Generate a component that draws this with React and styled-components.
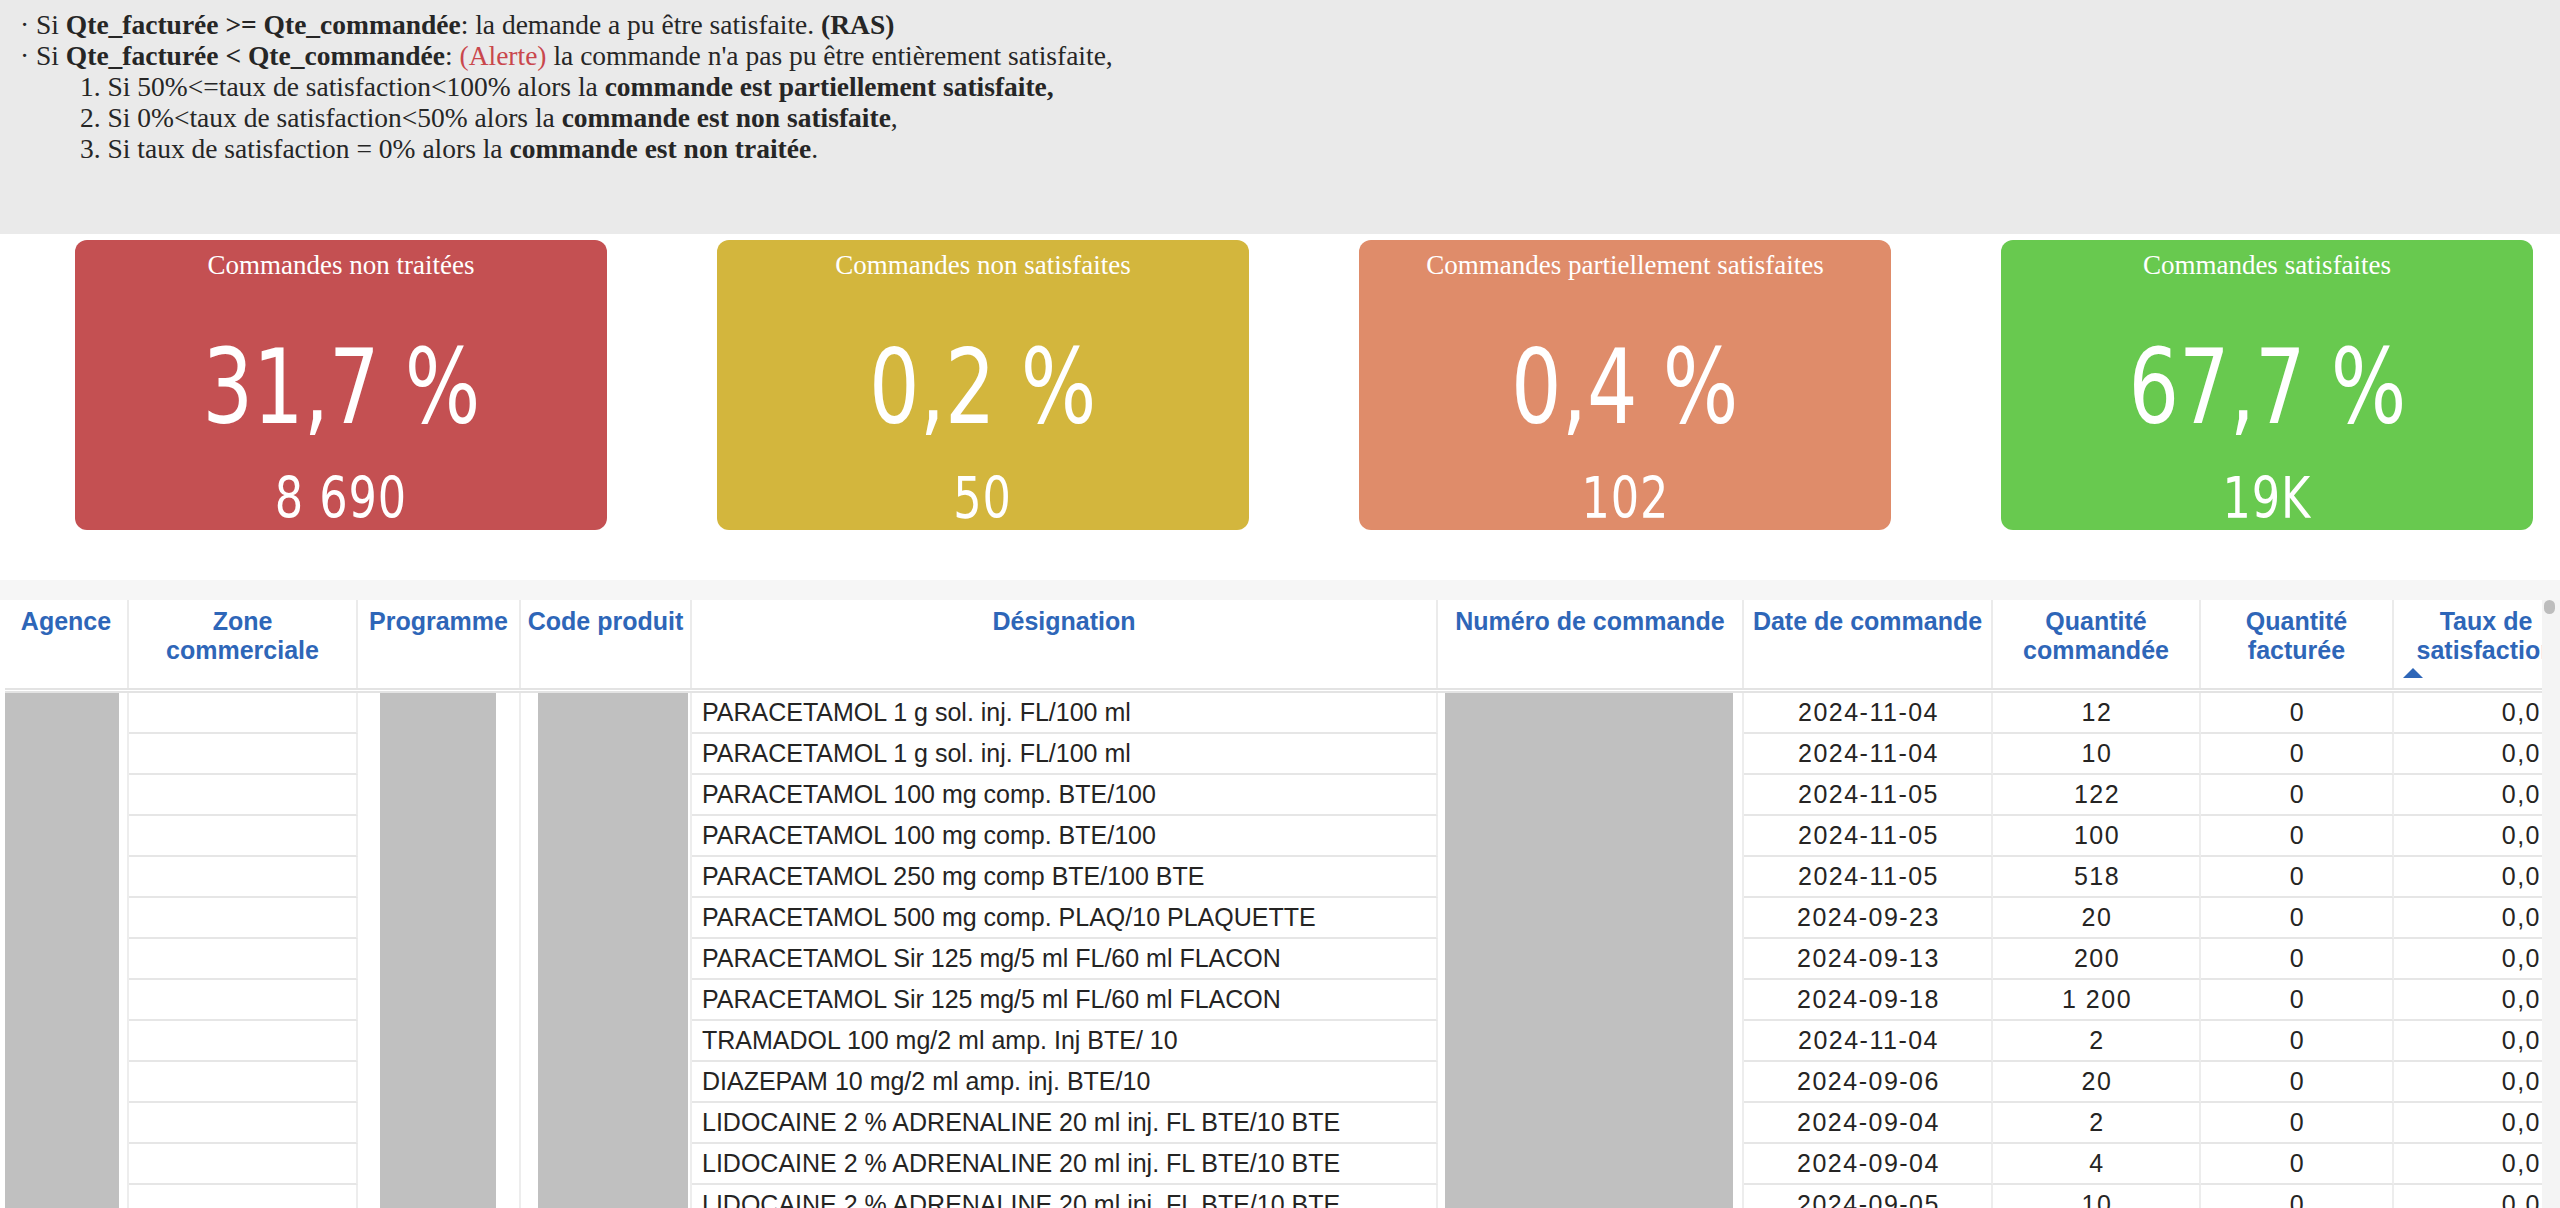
import styled, { createGlobalStyle } from "styled-components"

const GlobalStyle = createGlobalStyle`
    html, body {
        margin: 0;
        padding: 0;
        overflow: hidden;
        background: #fff;
    }
    #root {
        width: 2560px;
    }
`

const cards = [
    { title: 'Commandes non traitées', rate: '31,7 %', count: '8 690', color: '#C45052' },
    { title: 'Commandes non satisfaites', rate: '0,2 %', count: '50', color: '#D3B63D' },
    { title: 'Commandes partiellement satisfaites', rate: '0,4 %', count: '102', color: '#DF8C6A' },
    { title: 'Commandes satisfaites', rate: '67,7 %', count: '19K', color: '#68C94F' },
]

// mask = [left, right] margins of the grey redaction block inside the cell
const columns = [
    { key: 'agence', label: 'Agence', width: 124, mask: [0, 8] },
    { key: 'zone', label: <>Zone<br />commerciale</>, width: 229 },
    { key: 'programme', label: 'Programme', width: 163, mask: [22, 23] },
    { key: 'code', label: 'Code produit', width: 171, mask: [17, 2] },
    { key: 'designation', label: 'Désignation', width: 746, align: 'flex-start' },
    { key: 'numero', label: 'Numéro de commande', width: 306, mask: [7, 9] },
    { key: 'date', label: 'Date de commande', width: 249, num: true },
    { key: 'qteCmd', label: <>Quantité<br />commandée</>, width: 208, num: true },
    { key: 'qteFact', label: <>Quantité<br />facturée</>, width: 193, num: true },
    { key: 'taux', label: <>Taux de<br />satisfaction</>, width: 186, num: true, align: 'flex-end', sorted: true },
]

const rows = [
    ['PARACETAMOL 1 g sol. inj. FL/100 ml', '2024-11-04', '12'],
    ['PARACETAMOL 1 g sol. inj. FL/100 ml', '2024-11-04', '10'],
    ['PARACETAMOL 100 mg comp. BTE/100', '2024-11-05', '122'],
    ['PARACETAMOL 100 mg comp. BTE/100', '2024-11-05', '100'],
    ['PARACETAMOL 250 mg comp BTE/100 BTE', '2024-11-05', '518'],
    ['PARACETAMOL 500 mg comp. PLAQ/10 PLAQUETTE', '2024-09-23', '20'],
    ['PARACETAMOL Sir 125 mg/5 ml FL/60 ml FLACON', '2024-09-13', '200'],
    ['PARACETAMOL Sir 125 mg/5 ml FL/60 ml FLACON', '2024-09-18', '1 200'],
    ['TRAMADOL 100 mg/2 ml amp. Inj BTE/ 10', '2024-11-04', '2'],
    ['DIAZEPAM 10 mg/2 ml amp. inj. BTE/10', '2024-09-06', '20'],
    ['LIDOCAINE 2 % ADRENALINE 20 ml inj. FL BTE/10 BTE', '2024-09-04', '2'],
    ['LIDOCAINE 2 % ADRENALINE 20 ml inj. FL BTE/10 BTE', '2024-09-04', '4'],
    ['LIDOCAINE 2 % ADRENALINE 20 ml inj. FL BTE/10 BTE', '2024-09-05', '10'],
].map(([designation, date, qteCmd]) => ({
    designation, date, qteCmd, qteFact: '0', taux: '0,0',
}))

const SortArrow = () => (
    <svg width="20" height="10" viewBox="0 0 20 10">
        <polygon points="10,0 20,10 0,10" fill="#2E66B8" />
    </svg>
)

const App = () => {
    return (
        <Page>
            <GlobalStyle />
            <Info>
                <Line>· Si <b>Qte_facturée &gt;= Qte_commandée</b>: la demande a pu être satisfaite. <b>(RAS)</b></Line>
                <Line>· Si <b>Qte_facturée &lt; Qte_commandée</b>: <Alert>(Alerte)</Alert> la commande n'a pas pu être entièrement satisfaite,</Line>
                <SubLine>1. Si 50%&lt;=taux de satisfaction&lt;100% alors la <b>commande est partiellement satisfaite,</b></SubLine>
                <SubLine>2. Si 0%&lt;taux de satisfaction&lt;50% alors la <b>commande est non satisfaite</b>,</SubLine>
                <SubLine>3. Si taux de satisfaction = 0% alors la <b>commande est non traitée</b>.</SubLine>
            </Info>

            <CardRow>
                {cards.map((c) => (
                    <Card key={c.title} $bg={c.color}>
                        <CardTitle>{c.title}</CardTitle>
                        <CardRate>{c.rate}</CardRate>
                        <CardCount>{c.count}</CardCount>
                    </Card>
                ))}
            </CardRow>

            <TableSection>
                <Band />
                <TableWrap>
                    <Viewport>
                        <HeadRow>
                            {columns.map((col) => (
                                <HeadCell key={col.key} $w={col.width}>
                                    <span>{col.label}</span>
                                    {col.sorted && <ArrowBox><SortArrow /></ArrowBox>}
                                </HeadCell>
                            ))}
                        </HeadRow>
                        {rows.map((r, i) => (
                            <Row key={i}>
                                {columns.map((col) => (
                                    col.mask ? (
                                        <Cell key={col.key} $w={col.width} $masked>
                                            <Mask $l={col.mask[0]} $r={col.mask[1]} />
                                        </Cell>
                                    ) : (
                                        <Cell key={col.key} $w={col.width} $align={col.align} $num={col.num}>
                                            {r[col.key] || ''}
                                        </Cell>
                                    )
                                ))}
                            </Row>
                        ))}
                    </Viewport>
                    <ScrollTrack>
                        <Thumb />
                    </ScrollTrack>
                </TableWrap>
            </TableSection>
        </Page>
    )
}

export default App

const Page = styled.div`
    width: 2560px;
    height: 1208px;
    overflow: hidden;
    background: #fff;
`

const Info = styled.div`
    box-sizing: border-box;
    height: 234px;
    padding: 9px 0 0 20px;
    background: #EAEAEA;
    font-family: "Liberation Serif", "Times New Roman", serif;
    font-size: 27.5px;
    line-height: 31px;
    color: #262626;

    b {
        font-weight: bold;
    }
`

const Line = styled.div`
    white-space: nowrap;
`

const SubLine = styled.div`
    white-space: nowrap;
    padding-left: 60px;
`

const Alert = styled.span`
    color: #C9474C;
`

const CardRow = styled.div`
    display: flex;
    gap: 110px;
    padding: 6px 0 0 75px;
    height: 346px;
    box-sizing: border-box;
`

const Card = styled.div`
    width: 532px;
    height: 290px;
    border-radius: 12px;
    background: ${(p) => p.$bg};
    color: #fff;
    display: flex;
    flex-direction: column;
    align-items: center;
    box-sizing: border-box;
    padding-top: 9px;
`

const CardTitle = styled.div`
    font-family: "Liberation Serif", "Times New Roman", serif;
    font-size: 27px;
    line-height: 32px;
    white-space: nowrap;
`

const CardRate = styled.div`
    margin-top: 54px;
    font-family: "Liberation Sans Narrow", "DejaVu Sans Condensed", Roboto, sans-serif;
    font-size: 104px;
    line-height: 104px;
    transform: scaleX(0.85);
    white-space: nowrap;
`

const CardCount = styled.div`
    margin-top: 31px;
    font-family: "Liberation Sans Narrow", "DejaVu Sans Condensed", Roboto, sans-serif;
    font-size: 57px;
    line-height: 57px;
    letter-spacing: 1px;
    transform: scaleX(0.87);
    white-space: nowrap;
`

const TableSection = styled.div`
    display: flex;
    flex-direction: column;
`

const Band = styled.div`
    height: 20px;
    background: #F6F6F6;
`

const TableWrap = styled.div`
    display: flex;
    padding-left: 5px;
`

const Viewport = styled.div`
    width: 2537px;
    overflow: hidden;
    background: #fff;
`

const HeadRow = styled.div`
    display: flex;
    border-bottom: 5px double #E3E3E3;
`

const HeadCell = styled.div`
    box-sizing: border-box;
    flex: none;
    width: ${(p) => p.$w}px;
    height: 88px;
    padding: 7px 4px 0;
    border-right: 2px solid #EBEBEB;
    display: flex;
    flex-direction: column;
    align-items: center;
    text-align: center;
    font-family: "Liberation Sans", Arial, sans-serif;
    font-weight: bold;
    font-size: 25px;
    line-height: 29px;
    color: #2E66B8;
    white-space: nowrap;
`

const ArrowBox = styled.div`
    align-self: flex-start;
    margin: 3px 0 0 5px;
    line-height: 0;
`

const Row = styled.div`
    display: flex;
`

const Cell = styled.div`
    box-sizing: border-box;
    flex: none;
    width: ${(p) => p.$w}px;
    height: 41px;
    border-right: 2px solid #EDEDED;
    border-bottom: ${(p) => (p.$masked ? 'none' : '2px solid #E6E6E6')};
    padding: ${(p) => (p.$masked ? '0' : p.$align === 'flex-end' ? '0 37px 0 10px' : '0 8px 0 10px')};
    display: flex;
    align-items: center;
    justify-content: ${(p) => p.$align || 'center'};
    font-family: "Liberation Sans", Arial, sans-serif;
    font-size: 25px;
    color: #252423;
    letter-spacing: ${(p) => (p.$num ? '1.5px' : '0')};
    white-space: nowrap;
    overflow: hidden;
`

const Mask = styled.div`
    flex: 1;
    align-self: stretch;
    margin: 0 ${(p) => p.$r}px 0 ${(p) => p.$l}px;
    background: #C0C0C0;
`

const ScrollTrack = styled.div`
    width: 18px;
    background: #F4F4F4;
    display: flex;
    flex-direction: column;
    align-items: flex-start;
`

const Thumb = styled.div`
    width: 11px;
    height: 14px;
    margin: 0 0 0 2px;
    border-radius: 6px;
    background: #BDBDBD;
`
